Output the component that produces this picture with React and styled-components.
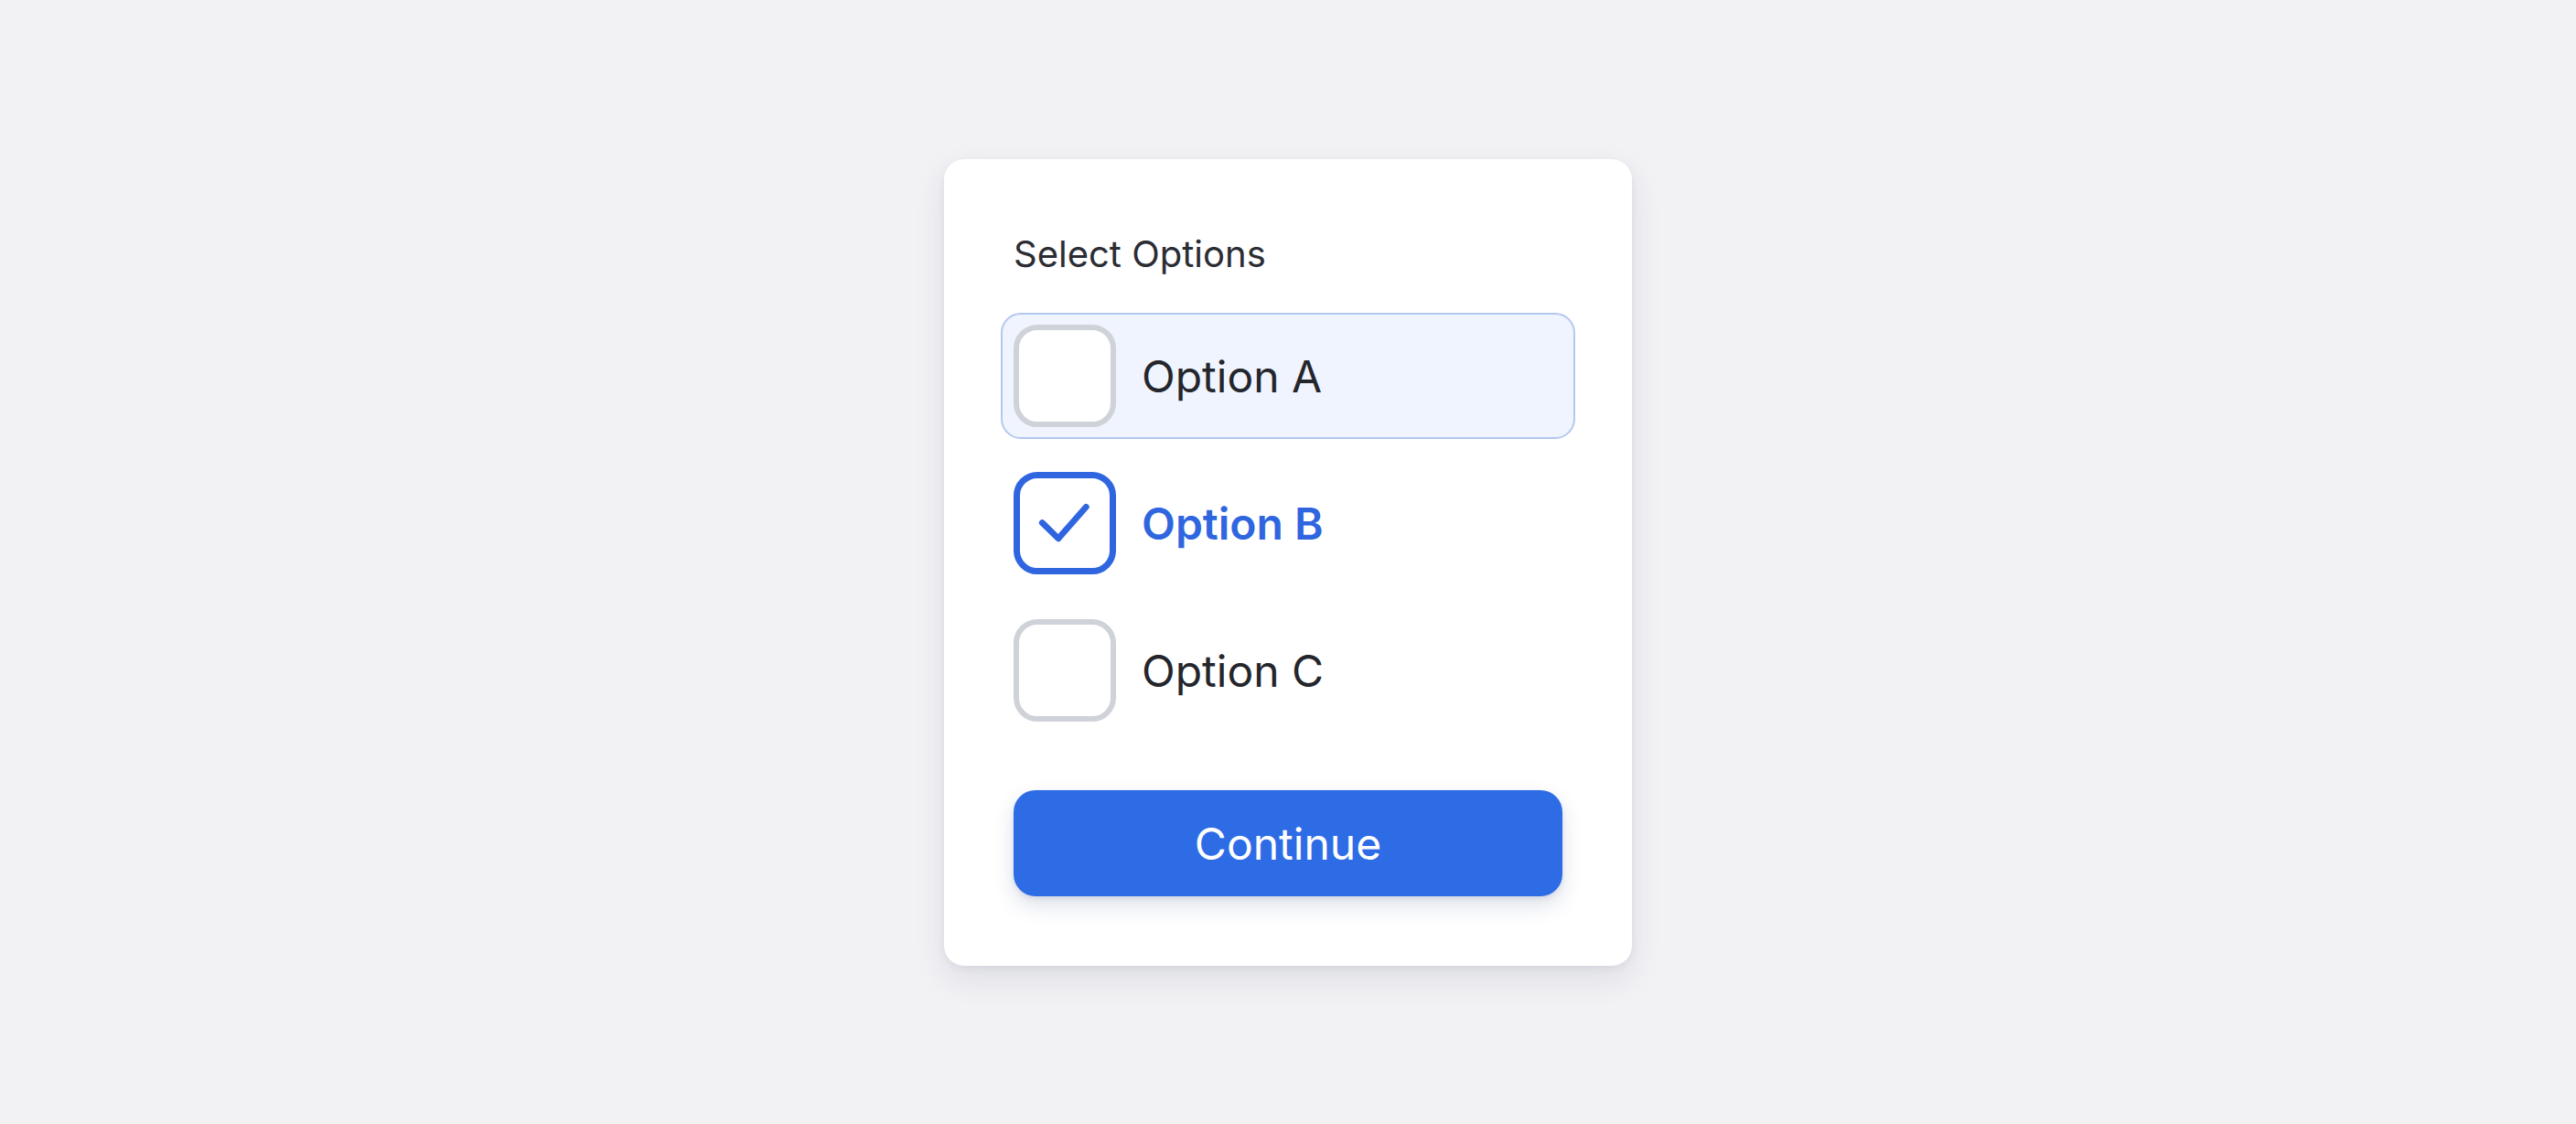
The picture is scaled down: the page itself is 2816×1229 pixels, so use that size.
import { useState } from 'react'
import styled, { createGlobalStyle } from 'styled-components'

const GlobalStyle = createGlobalStyle`
  body {
    margin: 0;
    background: #f2f2f5;
    font-family: Inter, 'Noto Sans', sans-serif;
  }
`

const options = [
  { id: 'a', label: 'Option A' },
  { id: 'b', label: 'Option B' },
  { id: 'c', label: 'Option C' },
]

function App() {
  const [checked, setChecked] = useState({ b: true })
  const [focused, setFocused] = useState('a')

  const toggle = (id) => {
    setFocused(id)
    setChecked({ ...checked, [id]: !checked[id] })
  }

  return (
    <Page>
      <GlobalStyle />
      <Card>
        <Title>Select Options</Title>
        <List>
          {options.map((opt) => (
            <Row
              key={opt.id}
              $focused={focused === opt.id}
              onClick={() => toggle(opt.id)}
            >
              <Box $checked={!!checked[opt.id]}>
                {checked[opt.id] && (
                  <svg width='112' height='112' viewBox='0 0 24 24' fill='none'>
                    <path
                      d='M6.7 11.9 L10.5 15.6 L17 8.2'
                      stroke='#2f66e0'
                      strokeWidth='1.45'
                      strokeLinecap='round'
                      strokeLinejoin='round'
                    />
                  </svg>
                )}
              </Box>
              <Label $checked={!!checked[opt.id]}>{opt.label}</Label>
            </Row>
          ))}
        </List>
        <Button type='button'>Continue</Button>
      </Card>
    </Page>
  )
}

const Page = styled.div`
  min-height: 100vh;
  display: flex;
  align-items: center;
  justify-content: center;
`

const Card = styled.div`
  width: 600px;
  padding: 80px 76px 76px;
  background: #ffffff;
  border-radius: 22px;
  box-shadow: 0 14px 34px rgba(40, 50, 80, 0.1), 0 3px 8px rgba(40, 50, 80, 0.06);
  display: flex;
  flex-direction: column;
`

const Title = styled.div`
  font-size: 40px;
  line-height: 48px;
  color: #2b2d34;
  margin-bottom: 40px;
`

const List = styled.div`
  display: flex;
  flex-direction: column;
  gap: 23px;
  margin: 0 -14px 62px;
`

const Row = styled.div`
  display: flex;
  align-items: center;
  gap: 28px;
  padding: 11px 12px;
  border: 2px solid ${(p) => (p.$focused ? '#b3c8ee' : 'transparent')};
  background: ${(p) => (p.$focused ? '#eff4fe' : 'transparent')};
  border-radius: 22px;
  cursor: pointer;
`

const Box = styled.div`
  box-sizing: border-box;
  width: 112px;
  height: 112px;
  flex: none;
  border-radius: 26px;
  background: #ffffff;
  border: ${(p) => (p.$checked ? '7px solid #2f66e0' : '6px solid #cfd2d8')};
  display: flex;
  align-items: center;
  justify-content: center;
  svg {
    flex: none;
  }
`

const Label = styled.span`
  font-size: 48px;
  line-height: 56px;
  padding-top: 3px;
  font-weight: ${(p) => (p.$checked ? 600 : 400)};
  color: ${(p) => (p.$checked ? '#2f66e0' : '#24262c')};
`

const Button = styled.button`
  height: 116px;
  padding-top: 2px;
  border: none;
  border-radius: 24px;
  background: #2e6ce6;
  color: #ffffff;
  font-family: Inter, 'Noto Sans', sans-serif;
  font-size: 48px;
  font-weight: 400;
  box-shadow: 0 10px 22px rgba(40, 60, 120, 0.16), 0 2px 5px rgba(40, 60, 120, 0.1);
  cursor: pointer;
`

export default App
